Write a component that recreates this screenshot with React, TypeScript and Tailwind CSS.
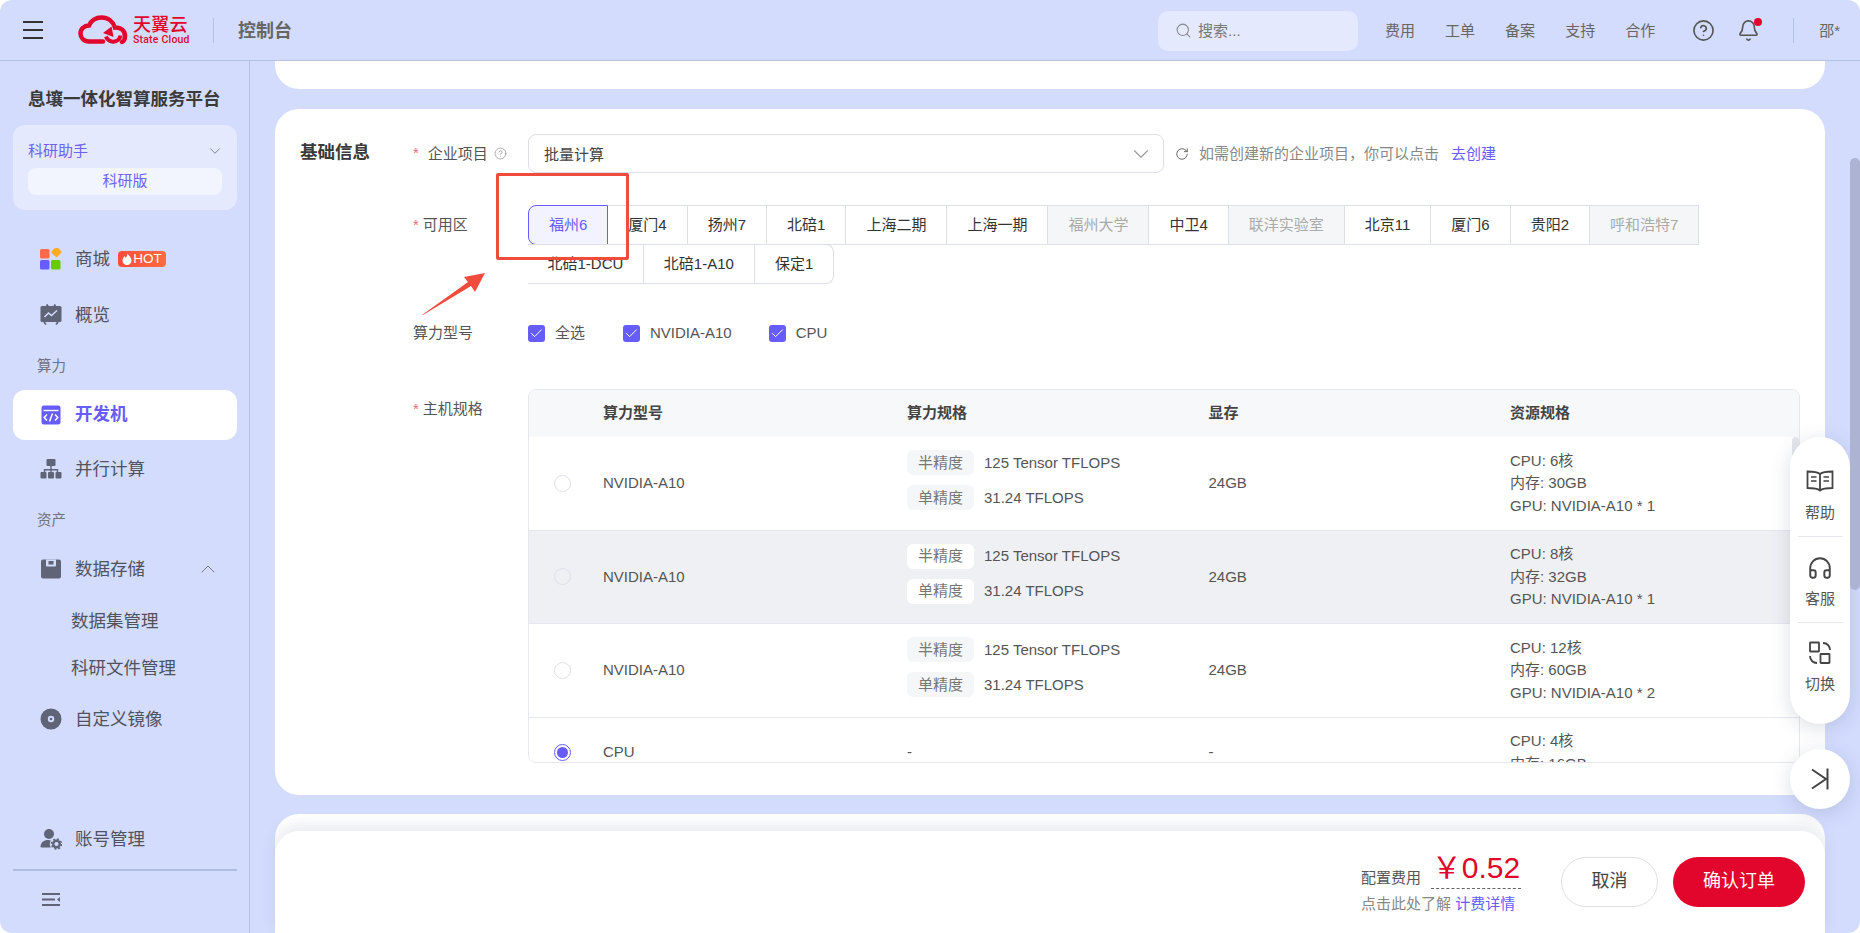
import { Bell, Check, ChevronDown, ChevronUp, CircleHelp, Headphones, RotateCw, Search } from 'lucide-react';

const topLinks = ['费用', '工单', '备案', '支持', '合作'];

const zonesRowOne = [
  { name: '福州6', state: 'active' },
  { name: '厦门4' },
  { name: '扬州7' },
  { name: '北碚1' },
  { name: '上海二期' },
  { name: '上海一期' },
  { name: '福州大学', state: 'off' },
  { name: '中卫4' },
  { name: '联洋实验室', state: 'off' },
  { name: '北京11' },
  { name: '厦门6' },
  { name: '贵阳2' },
  { name: '呼和浩特7', state: 'off' },
];

const hosts = [
  { res: ['CPU: 6核', '内存: 30GB', 'GPU: NVIDIA-A10 * 1'], bg: 'bg-white' },
  { res: ['CPU: 8核', '内存: 32GB', 'GPU: NVIDIA-A10 * 1'], bg: 'bg-[#eff0f4]', dim: true },
  { res: ['CPU: 12核', '内存: 60GB', 'GPU: NVIDIA-A10 * 2'], bg: 'bg-white' },
];

const Logo = () => (
  <div className="flex items-center">
    <svg width="50" height="30" viewBox="0 0 50 30" fill="none" className="mr-[5px]">
      <path
        d="M25 26.5H11C5.5 26.5 2.5 22.5 2.5 18.5 2.5 14 6 10.5 11 10.5 13 5.5 18 2.5 23.5 2.5c6.5 0 11.5 4 13.5 10 6-.5 10 3.5 10 8.5 0 3-1 5-3 6"
        stroke="#e2062c"
        strokeWidth="4.5"
        strokeLinecap="round"
      />
      <path d="M42.5 20.5A7.5 7.5 0 0 1 28 21.5" stroke="#e2062c" strokeWidth="4" />
      <path d="M33.5 11.5L25 18l10.5 4z" fill="#e2062c" />
    </svg>
    <div className="flex w-[55px] flex-col text-[#e2062c]">
      <span className="text-[18px] leading-[20px] font-medium tracking-[0.3px] whitespace-nowrap">天翼云</span>
      <span className="font-['Roboto'] text-[10.5px] leading-[10px] font-medium tracking-[0.2px] whitespace-nowrap">
        State Cloud
      </span>
    </div>
  </div>
);

const StoreIcon = () => (
  <svg width="22" height="22" viewBox="0 0 22 22">
    <rect x="0" y="1" width="9.5" height="9.5" rx="1.5" fill="#ff6a4d" />
    <rect x="12.5" y="0" width="8" height="8" rx="1.5" fill="#ffab1f" transform="rotate(45 16.5 4)" />
    <rect x="0" y="12" width="9.5" height="9.5" rx="1.5" fill="#665cff" />
    <rect x="11" y="12" width="9.5" height="9.5" rx="1.5" fill="#66cc00" />
  </svg>
);

const OverviewIcon = () => (
  <svg width="22" height="22" viewBox="0 0 22 22">
    <rect x="0.5" y="2" width="21" height="16" rx="1.5" fill="#5f6477" />
    <path d="M4 18l2 2.5M18 18l-2 2.5M8 2L6.5.5M14 2l1.5-1.5" stroke="#5f6477" strokeWidth="1.8" />
    <path d="M4.5 13l4-4 3 2.5 5.5-5" stroke="#d3dcfd" strokeWidth="1.5" fill="none" />
  </svg>
);

const DevIcon = () => (
  <svg width="22" height="22" viewBox="0 0 22 22">
    <rect x="1.5" y="1.5" width="19" height="19" rx="2.5" fill="#665cff" />
    <path d="M3.5 6.5h15" stroke="#fff" strokeWidth="1.4" />
    <path d="M7 10.5l-2.8 3 2.8 3M15 10.5l2.8 3-2.8 3M12.5 9.5l-3 8" stroke="#fff" strokeWidth="1.5" fill="none" />
  </svg>
);

const TreeIcon = () => (
  <svg width="22" height="22" viewBox="0 0 22 22" fill="#5f6477">
    <rect x="6.5" y="1" width="9" height="7" rx="1" />
    <rect x="0.5" y="14" width="6" height="6.5" rx="1" />
    <rect x="8" y="14" width="6" height="6.5" rx="1" />
    <rect x="15.5" y="14" width="6" height="6.5" rx="1" />
    <path d="M10.3 8h1.4v3h6.5v3h-1.4v-1.6H11.7V14h-1.4v-1.6H5.2V14H3.8v-3h6.5z" />
  </svg>
);

const DiskIcon = () => (
  <svg width="22" height="22" viewBox="0 0 22 22">
    <rect x="1" y="1.5" width="20" height="19" rx="2" fill="#5f6477" />
    <path d="M6 1.5h10v6a1 1 0 0 1-1 1H7a1 1 0 0 1-1-1z" fill="#d3dcfd" />
    <rect x="8.5" y="3" width="5" height="3.5" fill="#5f6477" />
  </svg>
);

const DiscIcon = () => (
  <svg width="22" height="22" viewBox="0 0 22 22">
    <circle cx="11" cy="11" r="10.5" fill="#5f6477" />
    <circle cx="11" cy="11" r="3.2" fill="#d3dcfd" />
    <circle cx="11" cy="11" r="1.3" fill="#5f6477" />
  </svg>
);

const AccountIcon = () => (
  <svg width="22" height="22" viewBox="0 0 22 22" fill="#5f6477">
    <circle cx="9" cy="6" r="5" />
    <path d="M.5 19c0-4.5 3.5-7 7.5-7 1.2 0 2.2.2 3 .5-1 1.3-1.5 3-1 5 .2.8.6 1.500 1 2H2c-1 0-1.500-.5-1.500-.5z" />
    <circle cx="16.5" cy="16" r="3.3" fill="none" stroke="#5f6477" strokeWidth="2.4" />
    <circle cx="16.5" cy="16" r="5" fill="none" stroke="#5f6477" strokeWidth="1.5" strokeDasharray="2 1.9" />
  </svg>
);

const NavItem = ({ icon, label, className = '', children }: any) => (
  <div className={`flex h-[50px] items-center px-[27px] text-[17.5px] text-[#4f5260] ${className}`}>
    <span className="mr-[13px] flex w-[22px] justify-center">{icon}</span>
    {label}
    {children}
  </div>
);

const Sidebar = () => (
  <aside className="flex w-[250px] shrink-0 flex-col border-r border-[#b3c1e3] pr-[12px] pl-[13px]">
    <h1 className="mt-[26px] ml-[15px] text-[17.5px] leading-[24px] font-bold whitespace-nowrap text-[#3a3a3a]">
      息壤一体化智算服务平台
    </h1>
    <div className="mt-[14px] h-[85px] rounded-[12px] bg-[#e4e9fe] px-[15px]">
      <div className="flex h-[43px] items-center justify-between pt-[9px] text-[15px] text-[#6b63f0]">
        科研助手
        <ChevronDown size={18} color="#777" strokeWidth={1.2} className="-mr-[2px]" />
      </div>
      <div className="flex h-[27px] items-center justify-center rounded-[8px] bg-[#f3f5fe] text-[15px] text-[#6b63f0]">
        科研版
      </div>
    </div>
    <div className="mt-[24px]">
      <NavItem icon={<StoreIcon />} label="商城">
        <span className="ml-[8px] flex h-[16px] w-[48px] items-center justify-center rounded-[4px] bg-gradient-to-r from-[#ff4b3a] to-[#ff6b3d] text-[13.5px] text-white">
          <svg width="10" height="12" viewBox="0 0 10 12" fill="#fff" className="mr-[1px]">
            <path d="M5.5 0C6 2.5 9.5 4 9.5 7.5 9.5 10 7.5 12 5 12S.5 10 .5 7.5C.5 5.5 2 4.5 2.5 3c.7.5 1 1.2 1 2C4.800 4 5.700 2 5.500 0z" />
          </svg>
          HOT
        </span>
      </NavItem>
      <NavItem icon={<OverviewIcon />} label="概览" className="mt-[6px]" />
      <div className="flex h-[50px] items-center pt-[3px] pl-[24px] text-[14.5px] text-[#6f7280]">算力</div>
      <NavItem
        icon={<DevIcon />}
        label={<b className="-mt-[1px] font-bold">开发机</b>}
        className="rounded-[12px] bg-white text-[#665cff]"
      />
      <NavItem icon={<TreeIcon />} label="并行计算" className="mt-[4px]" />
      <div className="flex h-[50px] items-center pt-[3px] pl-[24px] text-[14.5px] text-[#6f7280]">资产</div>
      <NavItem icon={<DiskIcon />} label="数据存储">
        <ChevronUp size={24} color="#777" strokeWidth={1} className="-mr-[10px] ml-auto" />
      </NavItem>
      <div className="mt-[4px] flex h-[47px] items-center pl-[58px] text-[17.5px] text-[#4f5260]">数据集管理</div>
      <div className="flex h-[46px] items-center pl-[58px] text-[17.5px] text-[#4f5260]">科研文件管理</div>
      <NavItem icon={<DiscIcon />} label="自定义镜像" className="mt-[3px]" />
    </div>
    <div className="mt-auto pb-[5px]">
      <NavItem icon={<AccountIcon />} label="账号管理" />
      <div className="mt-[5px] h-[2px] bg-[#afbbdf]" />
      <div className="flex h-[57px] items-center pl-[29px]">
        <svg width="19" height="15" viewBox="0 0 19 15" fill="none" stroke="#5f6477" strokeWidth="1.8">
          <path d="M0 2h18M0 7.5h13M0 13h18" />
          <path d="M18 5l-3 2.5 3 2.5z" fill="#5f6477" stroke="none" />
        </svg>
      </div>
    </div>
  </aside>
);

const Header = () => (
  <header className="flex h-[61px] shrink-0 items-center border-b border-[#b3c1e3] pl-[23px] text-[15px] text-[#666]">
    <div className="flex w-[20px] flex-col gap-[5.5px]">
      <i className="block h-[2.5px] bg-[#333]" />
      <i className="block h-[2.5px] bg-[#333]" />
      <i className="block h-[2.5px] bg-[#333]" />
    </div>
    <div className="ml-[35px]">
      <Logo />
    </div>
    <i className="ml-[25px] block h-[25px] w-px bg-[#b3c1e3]" />
    <span className="ml-[24px] pt-[2px] text-[18px] font-bold text-[#666]">控制台</span>
    <div className="mt-[1px] ml-auto flex h-[40px] w-[200px] items-center rounded-[10px] bg-[#e4e9fe] pl-[17px] text-[#777]">
      <Search size={17} color="#888" strokeWidth={1.5} className="mr-[6px]" />
      <span className="pt-[2px]">搜索...</span>
    </div>
    <nav className="ml-[27px] flex gap-[30px] pt-[2px]">
      {topLinks.map((t) => (
        <span key={t}>{t}</span>
      ))}
    </nav>
    <CircleHelp size={23} color="#555" strokeWidth={1.7} className="ml-[37px]" />
    <div className="relative ml-[22px]">
      <Bell size={23} color="#555" strokeWidth={1.7} />
      <i className="absolute -top-[1px] -right-[2px] block size-[8px] rounded-full bg-[#e2062c]" />
    </div>
    <i className="ml-[33px] block h-[25px] w-px bg-[#b3c1e3]" />
    <span className="mr-[20px] ml-[25px] pt-[2px]">邵*</span>
  </header>
);

const Zones = () => (
  <div className="text-[15px] text-[#333]">
    <div className="flex h-[40px]">
      {zonesRowOne.map((z) => (
        <div
          key={z.name}
          className={
            z.state === 'active'
              ? 'flex items-center rounded-l-[8px] border border-[#665cff] bg-[#f3f2ff] px-[20px] text-[#665cff]'
              : z.state === 'off'
                ? 'flex items-center border-y border-r border-[#dcdfe6] bg-[#f5f6f8] px-[20px] text-[#aaa]'
                : 'flex items-center border-y border-r border-[#dcdfe6] bg-white px-[20px]'
          }
        >
          {z.name}
        </div>
      ))}
    </div>
    <div className="-mt-px flex h-[40px]">
      <div className="flex items-center border-y border-r border-[#dcdfe6] px-[19.5px]">北碚1-DCU</div>
      <div className="flex items-center border-y border-r border-[#dcdfe6] px-[20px]">北碚1-A10</div>
      <div className="flex items-center rounded-r-[8px] border-y border-r border-[#dcdfe6] px-[20px]">保定1</div>
    </div>
  </div>
);

const Checkbox = ({ label, className = '' }: any) => (
  <div className={`flex items-center text-[15px] text-[#555] ${className}`}>
    <span className="mr-[10px] flex size-[17px] items-center justify-center rounded-[3px] bg-[#665cff]">
      <Check size={15} color="#fff" strokeWidth={1.6} />
    </span>
    {label}
  </div>
);

const PrecisionTag = ({ tag, value, dim }: any) => (
  <div className="flex items-center">
    <span className={`flex h-[25px] w-[67px] items-center justify-center rounded-[6px] text-[#777] ${dim ? 'bg-white' : 'bg-[#f5f6f8]'}`}>
      {tag}
    </span>
    <span className="ml-[10px]">{value}</span>
  </div>
);

const Radio = ({ checked, dim }: any) =>
  checked ? (
    <span className="flex size-[17px] items-center justify-center rounded-full border border-[#665cff]">
      <i className="block size-[11px] rounded-full bg-[#665cff]" />
    </span>
  ) : (
    <span className={`block size-[17px] rounded-full border border-[#dcdfe6] ${dim ? 'bg-[#eff0f4]' : 'bg-white'}`} />
  );

const rowGrid = 'grid grid-cols-[74px_304px_301.5px_301.5px_1fr] items-center';

const HostTable = () => (
  <div className="relative h-[374px] overflow-hidden rounded-[8px] border border-[#e5e7ef] text-[15px] text-[#555]">
    <div className={`${rowGrid} h-[47px] bg-[#f7f8fa] font-bold text-[#444]`}>
      <span />
      <span>算力型号</span>
      <span>算力规格</span>
      <span>显存</span>
      <span>资源规格</span>
    </div>
    {hosts.map((h, i) => (
      <div key={i} className={`${rowGrid} h-[93.5px] border-b border-[#e5e7ef] ${h.bg}`}>
        <span className="ml-[25px]">
          <Radio dim={h.dim} />
        </span>
        <span>NVIDIA-A10</span>
        <div className="mb-[6px] flex flex-col gap-[10px]">
          <PrecisionTag tag="半精度" value="125 Tensor TFLOPS" dim={h.dim} />
          <PrecisionTag tag="单精度" value="31.24 TFLOPS" dim={h.dim} />
        </div>
        <span>24GB</span>
        <div className="leading-[22.5px]">
          {h.res.map((r) => (
            <div key={r}>{r}</div>
          ))}
        </div>
      </div>
    ))}
    <div className={`${rowGrid} h-[70px] bg-white`}>
      <span className="ml-[25px]">
        <Radio checked />
      </span>
      <span>CPU</span>
      <span>-</span>
      <span>-</span>
      <div className="leading-[22.5px]">
        <div>CPU: 4核</div>
        <div>内存: 16GB</div>
      </div>
    </div>
    <i className="absolute top-[47px] right-0 block h-[60px] w-[7px] rounded-[4px] bg-[#e6e7ec]" />
  </div>
);

const FormLabel = ({ children, star, gap = 'mr-[4px]' }: any) => (
  <div className="flex h-full w-[115px] shrink-0 items-center text-[15px] text-[#555]">
    {star && <span className={`text-[#f56c6c] ${gap}`}>*</span>}
    {children}
  </div>
);

const BasicInfo = () => (
  <section className="relative mt-[20px] flex h-[686px] rounded-[24px] bg-white px-[25px] pt-[25px]">
    <h2 className="w-[113px] shrink-0 text-[17.5px] leading-[36px] font-bold text-[#3a3a3a]">基础信息</h2>
    <div className="min-w-0 flex-1">
      <div className="flex h-[39px]">
        <FormLabel star gap="mr-[9px]">
          <span className="pt-[2px]">企业项目</span>
          <CircleHelp size={13} color="#999" strokeWidth={1.5} className="ml-[6px]" />
        </FormLabel>
        <div className="flex w-[636px] items-center justify-between rounded-[8px] border border-[#dcdfe6] pr-[9px] pl-[15px] text-[15px] text-[#444]">
          <span className="pt-[3px]">批量计算</span>
          <ChevronDown size={26} color="#999" strokeWidth={1} />
        </div>
        <div className="flex items-center pl-[11px] text-[15px] text-[#888]">
          <RotateCw size={14} color="#555" strokeWidth={1.5} className="mr-[10px]" />
          <span className="pt-[2px]">如需创建新的企业项目，你可以点击</span>
          <span className="ml-[12px] pt-[2px] text-[#665cff]">去创建</span>
        </div>
      </div>
      <div className="mt-[32px] flex">
        <div className="h-[40px]">
          <FormLabel star>可用区</FormLabel>
        </div>
        <Zones />
      </div>
      <div className="mt-[41px] flex h-[17px]">
        <FormLabel>算力型号</FormLabel>
        <Checkbox label="全选" />
        <Checkbox label="NVIDIA-A10" className="ml-[38px]" />
        <Checkbox label="CPU" className="ml-[37px]" />
      </div>
      <div className="mt-[47px] flex">
        <div className="h-[40px]">
          <FormLabel star>主机规格</FormLabel>
        </div>
        <div className="min-w-0 flex-1">
          <HostTable />
        </div>
      </div>
    </div>
    {/* annotation drawn on top of the zone picker */}
    <div className="absolute top-[64px] left-[221px] h-[87px] w-[133px] rounded-[2px] border-[3px] border-[#f04c3e]" />
    <svg className="absolute top-[161px] left-[145px]" width="66" height="46" viewBox="0 0 66 46">
      <path d="M2 45L48 12l-4-5L65 3 55 22l-4-6L3 45z" fill="#f04c3e" />
    </svg>
  </section>
);

const Footer = () => (
  <div className="absolute right-[35px] bottom-0 left-[25px] flex h-[102px] items-center justify-end rounded-t-[24px] bg-white pr-[20px] shadow-[0_-6px_14px_rgba(90,100,140,0.12)]">
    <div className="mt-[2px] mr-[40px] text-[15px] text-[#555]">
      <div className="flex items-end">
        <span className="mr-[10px] -mb-[1px]">配置费用</span>
        <span className="w-[90px] border-b border-dashed border-[#666] pb-[6px] text-center text-[30px] leading-[29px] whitespace-nowrap text-[#e2062c]">
          ￥0.52
        </span>
      </div>
      <div className="mt-[5px] leading-[20px] text-[#888]">
        点击此处了解 <span className="text-[#665cff]">计费详情</span>
      </div>
    </div>
    <button type="button" className="h-[50px] w-[97px] rounded-full border border-[#dcdfe6] bg-white pb-[2px] text-[18px] text-[#444]">
      取消
    </button>
    <button type="button" className="ml-[15px] h-[50px] w-[132px] rounded-full bg-[#e2062c] pb-[2px] text-[18px] text-white">
      确认订单
    </button>
  </div>
);

const Floaters = () => (
  <>
    <div className="absolute top-[376px] left-[1540px] flex h-[287px] w-[60px] flex-col items-center rounded-full bg-white text-[15px] text-[#555] shadow-[0_4px_20px_rgba(60,70,110,0.18)]">
      <div className="flex h-[100px] w-[45px] flex-col items-center justify-end border-b border-[#e5e7ef] pb-[12px]">
        <svg width="28" height="22" viewBox="0 0 28 22" fill="none" stroke="#444" strokeWidth="1.8" className="mb-[10px]">
          <path d="M14 4C11 1.5 6 1.5 1.5 1.5V18C6 18 11 18 14 20.500c3-2.500 8-2.500 12.500-2.500V1.500C22 1.500 17 1.500 14 4zM14 4v16" />
          <path d="M5 7h5.5M5 11h5.5M17.5 7H23M17.5 11H23" strokeWidth="1.5" />
        </svg>
        帮助
      </div>
      <div className="flex h-[86px] w-[45px] flex-col items-center justify-end border-b border-[#e5e7ef] pb-[12px]">
        <Headphones size={26} color="#444" strokeWidth={1.8} className="mb-[7px]" />
        客服
      </div>
      <div className="flex h-[86px] w-[45px] flex-col items-center justify-end pb-[14px]">
        <svg width="24" height="24" viewBox="0 0 24 24" fill="none" stroke="#444" strokeWidth="1.8" className="mb-[8px]">
          <rect x="2" y="1.5" width="9" height="9" rx="0.5" />
          <rect x="12.5" y="13" width="9" height="9" rx="0.5" />
          <path d="M15 2c4 0 7 3 7 7M9 22c-4 0-7-3-7-7" />
        </svg>
        切换
      </div>
    </div>
    <div className="absolute top-[688px] left-[1540px] flex size-[60px] items-center justify-center rounded-full bg-white shadow-[0_4px_20px_rgba(60,70,110,0.18)]">
      <svg width="18" height="22" viewBox="0 0 18 22" fill="none" stroke="#444" strokeWidth="2">
        <path d="M1 1.5L15 11 1 20.5M16.5.5v21" />
      </svg>
    </div>
  </>
);

export default function App() {
  return (
    <div className="flex h-[933px] w-[1860px] flex-col overflow-hidden rounded-[12px] bg-[#d3dcfd] [font-family:'Liberation_Sans','Noto_Sans_CJK_SC',sans-serif]">
      <Header />
      <div className="flex min-h-0 flex-1">
        <Sidebar />
        <main className="relative min-w-0 flex-1 overflow-hidden pr-[35px] pl-[25px]">
          <div className="h-[28px] rounded-b-[24px] bg-white" />
          <BasicInfo />
          <div className="mt-[19px] h-[200px] rounded-t-[24px] bg-gradient-to-b from-white to-[#eef0f6]" />
          <Footer />
          <Floaters />
          <i className="absolute top-[97px] right-0 block h-[432px] w-[10px] rounded-[5px] bg-[#adb4d3]" />
        </main>
      </div>
    </div>
  );
}
